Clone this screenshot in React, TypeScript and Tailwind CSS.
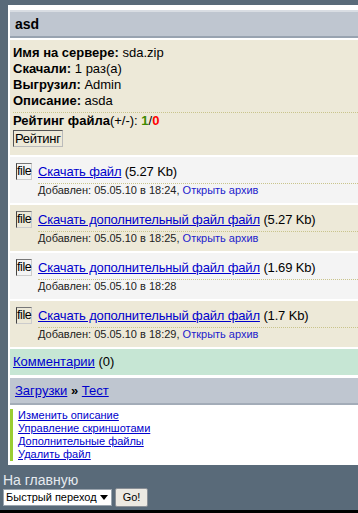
import React from 'react';

interface FileItem {
  title: string;
  size: string;
  added: string;
  archive: boolean;
}

const files: FileItem[] = [
  { title: 'Скачать файл', size: '5.27 Kb', added: '05.05.10 в 18:24', archive: true },
  { title: 'Скачать дополнительный файл файл', size: '5.27 Kb', added: '05.05.10 в 18:25', archive: true },
  { title: 'Скачать дополнительный файл файл', size: '1.69 Kb', added: '05.05.10 в 18:28', archive: false },
  { title: 'Скачать дополнительный файл файл', size: '1.7 Kb', added: '05.05.10 в 18:29', archive: true },
];

const adminLinks = [
  'Изменить описание',
  'Управление скриншотами',
  'Дополнительные файлы',
  'Удалить файл',
];

function FileIcon() {
  return (
    <span className="block h-[17px] w-[16px] shrink-0 border-t border-l border-b border-r border-t-[#777] border-l-[#444] border-r-[#ccc] border-b-[#ccc] text-[12.5px] leading-[15px] tracking-[-0.4px] whitespace-nowrap text-black">
      file
    </span>
  );
}

export default function App() {
  return (
    <div className="min-h-screen w-[358px] overflow-hidden bg-black font-['Liberation_Sans',Arial,sans-serif] text-[13px] leading-[16px] text-black">
      <div className="bg-[#596a79] pt-[5px]">
        {/* main container */}
        <div className="ml-[8px] w-[360px] bg-white pt-[5px] pb-[4px] pl-[2px]">
          {/* Title */}
          <div className="h-[28px] border-t-2 border-b-2 border-t-[#d9dde3] border-b-[#98a3b0] bg-[#bfc6d0] pl-[5px] text-[14px] font-bold leading-[25px]">
            asd
          </div>

          {/* Info */}
          <div className="mt-[2px] bg-[#ede9d8] pt-[5px] pb-[8px] pl-[3px]">
            <div><b>Имя на сервере:</b> sda.zip</div>
            <div><b>Скачали:</b> 1 раз(а)</div>
            <div><b>Выгрузил:</b> Admin</div>
            <div><b>Описание:</b> asda</div>
            <div className="mt-[3px] border-t border-dotted border-[#c9c48c]">
              <b>Рейтинг файла</b>(+/-): <b className="text-[#3d8a00]">1</b>/<b className="text-[#ff0000]">0</b>
            </div>
            <div className="mt-px block h-[17px] w-fit border border-t-[#555] border-l-[#555] border-r-[#bbb] border-b-[#bbb] pl-px pr-px text-[13px] leading-[15px] tracking-[-0.3px]">
              Рейтинг
            </div>
          </div>

          {/* Files */}
          {files.map((f, i) => (
            <div
              key={i}
              className={`mt-[2px] flex gap-[6px] pt-[6px] pb-[6px] pl-[6px] ${i % 2 === 0 ? 'bg-[#f4f4f4]' : 'bg-[#ede9d8]'}`}
            >
              <FileIcon />
              <div className="flex-1">
                <div className="h-[17px] pt-px whitespace-nowrap tracking-[-0.15px]">
                  <a href="#" className="text-[#0000cc] underline">{f.title}</a> ({f.size})
                </div>
                <div className="mt-[3px] border-t border-dotted border-[#c9c48c] text-[11px] leading-[13px] text-[#222]">
                  Добавлен: {f.added}
                  {f.archive && (
                    <>
                      , <a href="#" className="text-[#2222cc]">Открыть архив</a>
                    </>
                  )}
                </div>
              </div>
            </div>
          ))}

          {/* Comments */}
          <div className="mt-[2px] bg-[#c6e6d4] py-[5px] pl-[3px]">
            <a href="#" className="text-[#0000cc] underline">Комментарии</a> (0)
          </div>

          {/* Breadcrumb */}
          <div className="mt-[3px] h-[27px] border-b-2 border-b-[#a3acb8] bg-[#bfc6d0] pl-[5px] leading-[25px]">
            <a href="#" className="text-[#0000cc] underline">Загрузки</a> <b>»</b>{' '}
            <a href="#" className="text-[#0000cc] underline">Тест</a>
          </div>

          {/* Admin links */}
          <div className="mt-[4px] border-l-[3px] border-[#9acd32] pl-[5px] text-[11px] leading-[13px]">
            {adminLinks.map((l) => (
              <div key={l}>
                <a href="#" className="text-[#0000cc] underline">{l}</a>
              </div>
            ))}
          </div>
        </div>

        {/* Footer nav */}
        <div className="pt-[7px] pb-[3px] pl-[3px]">
          <a href="#" className="block text-[14px] leading-[16px] text-[#e6ebf0]">На главную</a>
          <div className="flex h-[19px] items-center gap-[3px]">
            <div className="flex h-[17px] w-[109px] items-center justify-between border border-[#9aa4ae] bg-white pl-[2px] pr-[3px] text-[11px] leading-[13px]">
              <span>Быстрый переход</span>
              <svg width="8" height="5" viewBox="0 0 8 5">
                <path d="M0 0h8L4 5z" fill="#000" />
              </svg>
            </div>
            <button className="h-[19px] w-[33px] rounded-[2px] border border-[#8a8f96] bg-[#ece9e2] text-[11px] leading-[17px] text-black">
              Go!
            </button>
          </div>
        </div>
      </div>
    </div>
  );
}
